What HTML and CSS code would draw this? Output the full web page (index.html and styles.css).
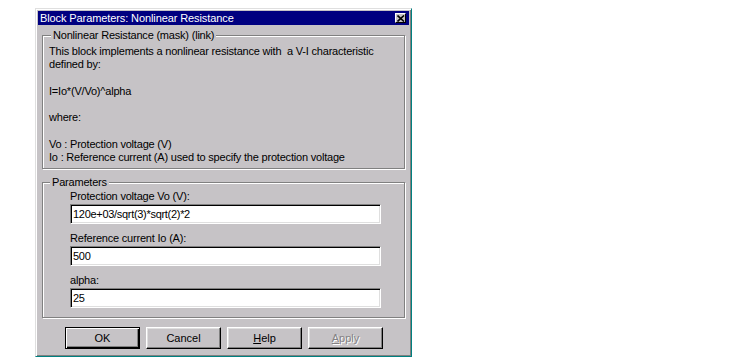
FILE: index.html
```html
<!DOCTYPE html>
<html lang="en">
<head>
    <meta charset="UTF-8">
    <title>Block Parameters: Nonlinear Resistance</title>
    <link rel="stylesheet" href="styles.css">
</head>
<body>
    <div class="window">
        <div class="title-bar">
            <span class="title-text">Block Parameters: Nonlinear Resistance</span>
            <span class="close-btn">
                <svg width="8" height="7" viewBox="0 0 8 7">
                    <path d="M0.5 0.5 L7 6.5 M7 0.5 L0.5 6.5" stroke="#000" stroke-width="1.6" fill="none"/>
                </svg>
            </span>
        </div>

        <fieldset class="group">
            <legend>Nonlinear Resistance (mask) (link)</legend>
            <div class="description">
                <p>This block implements a nonlinear resistance with &nbsp;a V-I characteristic</p>
                <p>defined by:</p>
                <p>&nbsp;</p>
                <p>I=Io*(V/Vo)^alpha</p>
                <p>&nbsp;</p>
                <p>where:</p>
                <p>&nbsp;</p>
                <p>Vo : Protection voltage (V)</p>
                <p>Io : Reference current (A) used to specify the protection voltage</p>
            </div>
        </fieldset>

        <fieldset class="group params">
            <legend>Parameters</legend>
            <div class="field">
                <label for="vo">Protection voltage Vo (V):</label>
                <input type="text" id="vo" value="120e+03/sqrt(3)*sqrt(2)*2">
            </div>
            <div class="field">
                <label for="io">Reference current Io (A):</label>
                <input type="text" id="io" value="500">
            </div>
            <div class="field">
                <label for="alpha">alpha:</label>
                <input type="text" id="alpha" value="25">
            </div>
        </fieldset>

        <div class="button-row">
            <button class="default-btn">OK</button>
            <button>Cancel</button>
            <button><u>H</u>elp</button>
            <button class="disabled-btn" disabled><u>A</u>pply</button>
        </div>
    </div>
</body>
</html>
```

FILE: styles.css
```css
body {
    margin: 0;
    background-color: #fff;
    font-family: "Liberation Sans", Arial, sans-serif;
    font-size: 11px;
    letter-spacing: -0.2px;
    color: #000;
}
.window {
    box-sizing: border-box;
    width: 377px;
    margin: 8px 0 0 35px;
    padding: 2px 2px 7px 2px;
    background-color: #c6c3c6;
    border: 1px solid;
    border-color: #dfdfdf #008080 #008080 #dfdfdf;
    box-shadow: inset 1px 1px 0 #fff, inset -1px -1px 0 #808080;
}
.title-bar {
    display: flex;
    align-items: center;
    justify-content: space-between;
    height: 14px;
    padding: 0 3px 0 2px;
    background-color: #000080;
    color: #fff;
    font-size: 11px;
    letter-spacing: -0.1px;
    line-height: 14px;
}
.close-btn {
    display: flex;
    align-items: center;
    justify-content: center;
    box-sizing: border-box;
    width: 11px;
    height: 10px;
    background-color: #c6c3c6;
    border: 1px solid;
    border-color: #fff #000 #000 #fff;
}
.group {
    margin: 3px 4px 0 4px;
    padding: 3px 6px 4px 6px;
    min-width: 0;
    border: 1px solid #808080;
    box-shadow: 1px 1px 0 #fff, inset 1px 1px 0 #fff;
}
.group legend {
    padding: 0 2px;
    margin-left: 2px;
    line-height: 14px;
    background-color: #c6c3c6;
}
.description p {
    margin: 0;
    line-height: 13.25px;
    white-space: nowrap;
}
.params {
    margin-top: 6px;
    padding: 1px 23px 9px 27px;
}
.params legend {
    margin-left: -20px;
}
.field {
    display: flex;
    flex-direction: column;
    margin-bottom: 8px;
}
.field:last-child {
    margin-bottom: 0;
}
.field label {
    line-height: 13px;
    margin-bottom: 1px;
}
.field input {
    box-sizing: border-box;
    height: 20px;
    margin: 0;
    padding: 0 2px;
    font-family: "Liberation Sans", Arial, sans-serif;
    font-size: 11px;
    letter-spacing: -0.3px;
    color: #000;
    background-color: #fff;
    border: 1px solid;
    border-color: #808080 #fff #fff #808080;
    box-shadow: inset 1px 1px 0 #000, inset -1px -1px 0 #dfdfdf;
    outline: none;
}
.button-row {
    display: flex;
    gap: 6px;
    margin-top: 9px;
    padding-left: 27px;
}
.button-row button {
    box-sizing: border-box;
    width: 75px;
    height: 22px;
    margin: 0;
    padding: 0;
    font-family: "Liberation Sans", Arial, sans-serif;
    font-size: 11px;
    color: #000;
    background-color: #c6c3c6;
    border: 1px solid;
    border-color: #fff #000 #000 #fff;
    box-shadow: inset -1px -1px 0 #808080, inset 1px 1px 0 #dfdfdf;
    border-radius: 0;
}
.button-row .default-btn {
    border-color: #000;
    box-shadow: inset 1px 1px 0 #fff, inset -1px -1px 0 #000, inset -2px -2px 0 #808080;
}
.button-row .disabled-btn {
    color: #848284;
    text-shadow: 1px 1px 0 #fff;
}
```
